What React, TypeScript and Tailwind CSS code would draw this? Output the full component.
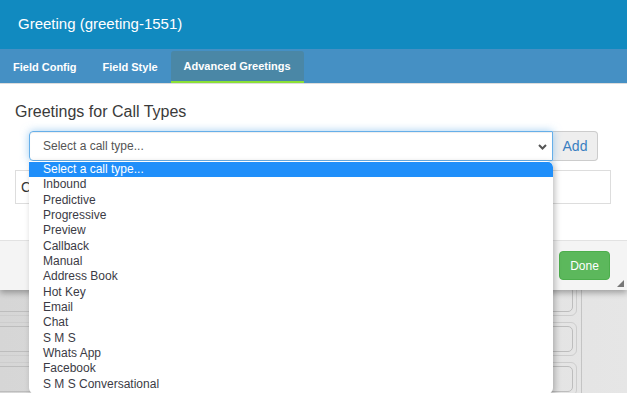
import React from "react";

const callTypes = [
  "Select a call type...",
  "Inbound",
  "Predictive",
  "Progressive",
  "Preview",
  "Callback",
  "Manual",
  "Address Book",
  "Hot Key",
  "Email",
  "Chat",
  "S M S",
  "Whats App",
  "Facebook",
  "S M S Conversational",
];

const tabs = ["Field Config", "Field Style", "Advanced Greetings"];

export default function App() {
  return (
    <div className="relative w-[627px] h-[393px] overflow-hidden bg-gradient-to-r from-[#d6d6d6] to-[#e6e6e6] font-['Liberation_Sans',Arial,sans-serif]">
      {/* Modal */}
      <div className="relative z-10 bg-white shadow-[0_3px_6px_rgba(0,0,0,0.3)]">
        <div className="h-[49px] bg-[#118ac0] pl-[18px] flex items-center text-[15px] text-white">
          Greeting (greeting-1551)
        </div>

        {/* Tabs */}
        <div className="h-[35px] bg-[#4590c4] border-b border-[#dcdcdc] flex items-end">
          {tabs.map((tab, i) => {
            const active = tab === "Advanced Greetings";
            return (
              <div
                key={tab}
                className={
                  active
                    ? "h-[32px] px-[13px] flex items-center text-[11px] font-bold text-white bg-[#4a87a6] rounded-t-[3px] border-b-2 border-[#8be036]"
                    : i === 0
                    ? "h-[32px] pl-[13px] pr-[13px] flex items-center text-[11px] font-bold text-white"
                    : "h-[32px] px-[13px] flex items-center text-[11px] font-bold text-white"
                }
              >
                {tab}
              </div>
            );
          })}
        </div>

        {/* Body */}
        <div className="h-[156px] pl-[15px] pr-[16px] pt-[18px]">
          <h3 className="text-[16px] leading-[20px] text-[#3a3a3a]">Greetings for Call Types</h3>
          <div className="relative z-20 mt-[9px] ml-[14px] w-[569px] flex h-[30px]">
            <div className="relative flex-1 flex items-center pl-[13px] border border-[#66afe9] rounded-l-[4px] shadow-[inset_0_1px_1px_rgba(0,0,0,0.075),0_0_8px_rgba(102,175,233,0.6)] text-[12px] text-[#555]">
              Select a call type...
              <svg className="absolute right-[5px] top-[12px]" width="9" height="6" viewBox="0 0 9 6">
                <path d="M1 1l3.5 3.5L8 1" fill="none" stroke="#555" strokeWidth="2" />
              </svg>
            </div>
            <div className="w-[45px] flex items-center justify-center bg-[#eee] border border-l-0 border-[#ccc] rounded-r-[4px] text-[14px] text-[#3a7fc1]">
              Add
            </div>

            {/* Open dropdown */}
            <ul className="absolute left-0 top-full w-[524px] h-[233px] bg-white rounded-b-[6px] rounded-tr-[6px] shadow-[2px_2px_6px_rgba(0,0,0,0.25)] pt-[1px] overflow-hidden">
              {callTypes.map((t, i) => (
                <li
                  key={t}
                  className={
                    i === 0
                      ? "h-[15.33px] leading-[15.33px] pl-[14px] text-[12px] text-white bg-[#1f8ffa] rounded-tr-[5px]"
                      : "h-[15.33px] leading-[15.33px] pl-[14px] text-[12px] text-[#3b3b45]"
                  }
                >
                  {t}
                </li>
              ))}
            </ul>
          </div>
          <div className="mt-[9px] h-[34px] border border-[#ddd] flex items-center pl-[5px] text-[14px] text-[#333]">
            C
          </div>
        </div>

        {/* Footer */}
        <div className="relative h-[50px] bg-[#f4f4f4] border-t border-[#e2e2e2] flex items-center justify-end pr-[17px]">
          <button className="w-[51px] h-[29px] rounded-[4px] bg-[#5cb85c] border border-[#4cae4c] text-[12px] text-white">
            Done
          </button>
          <svg className="absolute right-[3px] bottom-[3px]" width="7" height="7" viewBox="0 0 7 7">
            <path d="M7 0L7 7L0 7Z" fill="#777" />
          </svg>
        </div>
      </div>

      {/* Page behind the modal */}
      <div className="-mt-[8px] -ml-[12px] w-[594px] h-[120px] border-r border-[#c4c4c4] flex flex-col gap-[6px] pr-[4px]">
        {[0, 1, 2].map((r) => (
          <div key={r} className="h-[34px] border border-[#cdcdcd] rounded-[6px] p-[3px]">
            <div className="h-full border border-[#bdbdbd] rounded-[5px]" />
          </div>
        ))}
      </div>
    </div>
  );
}
